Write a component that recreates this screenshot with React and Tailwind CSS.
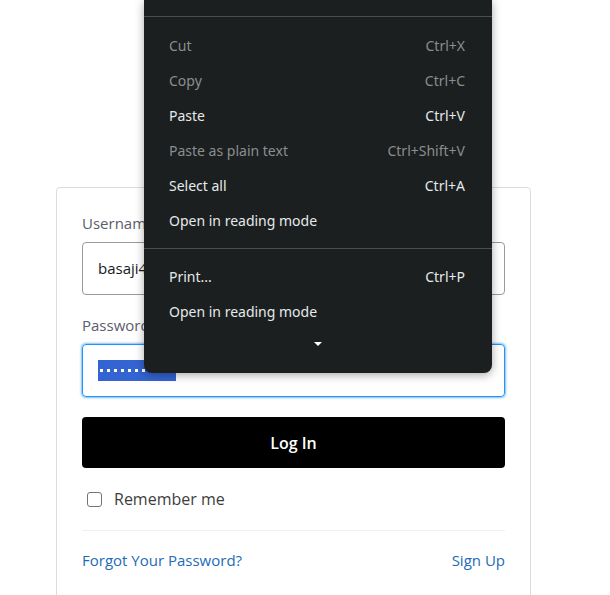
/**
 * Login page with an open browser context menu on top
 */

const menuItems = [
  { label: 'Cut', shortcut: 'Ctrl+X', disabled: true },
  { label: 'Copy', shortcut: 'Ctrl+C', disabled: true },
  { label: 'Paste', shortcut: 'Ctrl+V' },
  { label: 'Paste as plain text', shortcut: 'Ctrl+Shift+V', disabled: true },
  { label: 'Select all', shortcut: 'Ctrl+A' },
  { label: 'Open in reading mode' },
];

const menuItems2 = [
  { label: 'Print...', shortcut: 'Ctrl+P' },
  { label: 'Open in reading mode' },
];

const MenuRow = ({ label, shortcut, disabled }) => (
  <div
    className={`flex items-center justify-between h-[35px] pl-[25px] pr-[27px] text-[14px] ${
      disabled ? 'text-[#8b8e8e]' : 'text-[#e6e9ea]'
    }`}
  >
    <span>{label}</span>
    {shortcut && <span>{shortcut}</span>}
  </div>
);

const ContextMenu = () => (
  <div
    className="absolute left-[144px] top-0 w-[348px] h-[373px] bg-[#1b1f20] rounded-b-[8px] shadow-[0_2px_10px_rgba(0,0,0,0.35)] z-10"
    style={{ fontFamily: '"Noto Sans", "Open Sans", sans-serif' }}
  >
    <div className="h-[16px]" />
    <div className="h-px bg-[#4b4f50]" />
    <div className="h-[11px]" />
    {menuItems.map((item, i) => (
      <MenuRow key={i} {...item} />
    ))}
    <div className="h-[10px]" />
    <div className="h-px bg-[#4b4f50]" />
    <div className="h-[10px]" />
    {menuItems2.map((item, i) => (
      <MenuRow key={i} {...item} />
    ))}
    {/* Scroll-down arrow */}
    <div className="flex justify-center pt-[13px]">
      <div className="w-0 h-0 border-l-[4px] border-r-[4px] border-t-[4px] border-l-transparent border-r-transparent border-t-white" />
    </div>
  </div>
);

const App = () => {
  return (
    <div
      className="relative w-[610px] h-[595px] bg-white overflow-hidden"
      style={{ fontFamily: '"Open Sans", "Noto Sans", sans-serif' }}
    >
      <ContextMenu />

      {/* Login card */}
      <div className="ml-[56px] mt-[187px] w-[475px] h-[440px] border border-[#dcdcdc] rounded-[4px] px-[25px] pt-[24px]">
        <label className="block text-[15px] leading-[22px] text-[#5c5c6b]">Username</label>
        <div className="mt-[8px] h-[53px] border border-[#9a9a9a] rounded-[4px] flex items-center px-[15px] text-[15px] text-[#181818]">
          basaji4@example.com
        </div>

        <label className="block mt-[19px] text-[15px] leading-[22px] text-[#5c5c6b]">Password</label>
        <div className="mt-[8px] h-[53px] border border-[#1b96ff] rounded-[4px] shadow-[0_0_3px_#0176d3] flex items-center px-[15px]">
          <span className="w-[78px] h-[21px] bg-[#3464d1] flex items-center gap-[4px] pl-[2px]">
            {Array.from({ length: 11 }).map((_, i) => (
              <span key={i} className="w-[3px] h-[3px] bg-white" />
            ))}
          </span>
        </div>

        <button className="mt-[20px] w-full h-[51px] bg-black rounded-[4px] text-white text-[16px] font-semibold">
          Log In
        </button>

        <div className="mt-[19px] flex items-center">
          <span className="ml-[5px] w-[15px] h-[15px] border border-[#747474] rounded-[3px]" />
          <span className="ml-[12px] text-[16px] text-[#3e3e3c]">Remember me</span>
        </div>

        <div className="mt-[19px] h-px bg-[#f0f0f0]" />

        <div className="mt-[18px] flex items-center justify-between text-[15px] text-[#1d6bb9]">
          <span>Forgot Your Password?</span>
          <span>Sign Up</span>
        </div>
      </div>
    </div>
  );
};

export default App;
